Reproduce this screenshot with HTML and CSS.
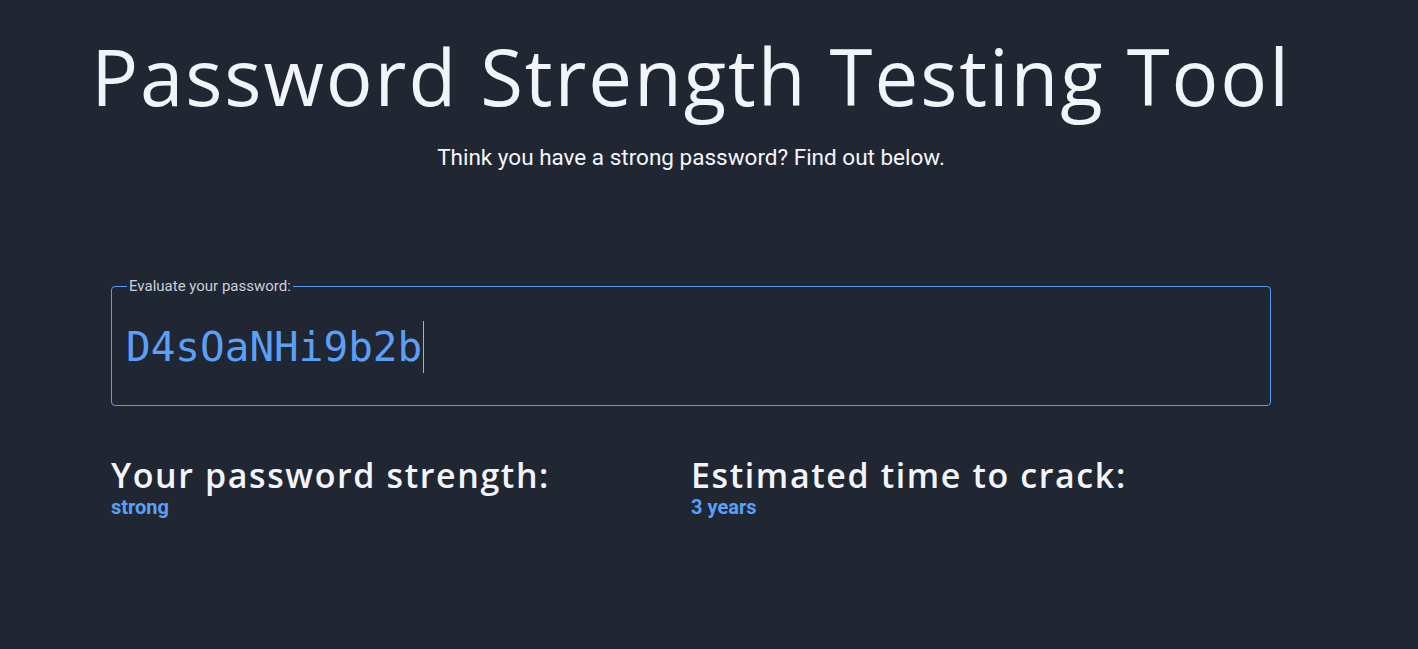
FILE: index.html
```html
<!DOCTYPE html>
<html lang="en">
<head>
<meta charset="utf-8">
<title>Password Strength Testing Tool</title>
<link rel="stylesheet" href="styles.css">
</head>
<body>
<main class="page">
  <header class="hero">
    <h1 class="title">Password Strength Testing Tool</h1>
    <p class="subtitle">Think you have a strong password? Find out below.</p>
  </header>
  <fieldset class="field">
    <legend class="field-label">Evaluate your password:</legend>
    <div class="field-value"><span class="pw">D4sOaNHi9b2b</span><span class="caret"></span></div>
  </fieldset>
  <section class="results">
    <div class="result">
      <h2 class="result-title">Your password strength:</h2>
      <div class="result-value">strong</div>
    </div>
    <div class="result">
      <h2 class="result-title">Estimated time to crack:</h2>
      <div class="result-value">3 years</div>
    </div>
  </section>
</main>
</body>
</html>
```
FILE: styles.css
```css
html, body {
  margin: 0;
  padding: 0;
  background: #212633;
  height: 100%;
}
body {
  font-family: Roboto, "Liberation Sans", sans-serif;
  color: #f1f4f8;
}
.page {
  width: 1160px;
  margin-left: 111px;
  display: flex;
  flex-direction: column;
}
.hero {
  display: flex;
  flex-direction: column;
  align-items: center;
}
.title {
  margin: 26px 0 0;
  font-family: "Open Sans", sans-serif;
  font-weight: 400;
  font-size: 78px;
  line-height: 100px;
  letter-spacing: 1.9px;
  color: #f1f4f8;
  white-space: nowrap;
}
.subtitle {
  margin: 16px 0 0;
  font-size: 22.5px;
  line-height: 30px;
  color: #f4f6fa;
}
.field {
  margin: 105px 0 0;
  padding: 0 14px;
  height: 129px;
  border: 1px solid #559cf2;
  border-radius: 4px;
  box-sizing: border-box;
}
.field-label {
  padding: 0 2px;
  margin-left: 1px;
  font-size: 15px;
  line-height: 18px;
  color: #c9ced8;
}
.field-value {
  display: flex;
  align-items: center;
  height: 100px;
  padding-top: 3px;
  box-sizing: border-box;
}
.pw {
  font-family: "DejaVu Sans Mono", monospace;
  font-size: 41px;
  color: #5aa0f7;
}
.caret {
  width: 1px;
  height: 52px;
  background: #aab0bb;
  margin-left: 1px;
}
.results {
  display: grid;
  grid-template-columns: 1fr 1fr;
  margin-top: 48px;
}
.result-title {
  margin: 0;
  font-family: "Open Sans", sans-serif;
  font-weight: 600;
  font-size: 34px;
  line-height: 42px;
  letter-spacing: 1.6px;
  color: #f1f4f8;
}
.result-value {
  margin-top: 0;
  font-weight: 700;
  font-size: 20px;
  line-height: 22px;
  color: #5aa0f7;
}
```
